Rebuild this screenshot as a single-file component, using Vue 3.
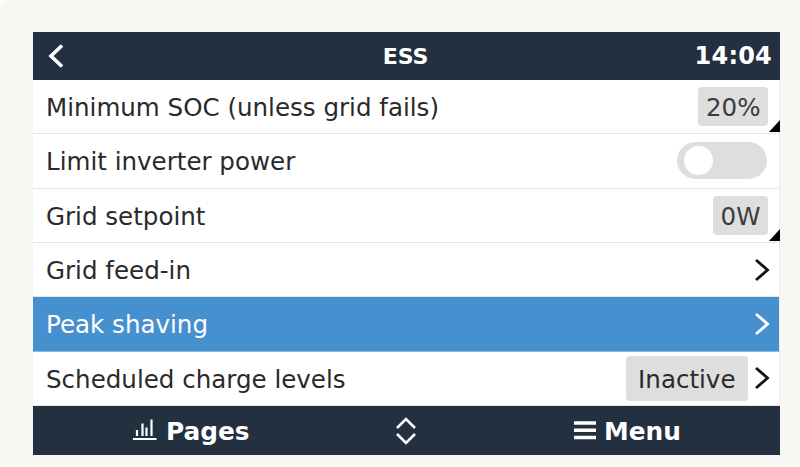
<script setup>
const rows = [
  { label: 'Minimum SOC (unless grid fails)', kind: 'value', value: '20%' },
  { label: 'Limit inverter power', kind: 'toggle' },
  { label: 'Grid setpoint', kind: 'value', value: '0W' },
  { label: 'Grid feed-in', kind: 'chevron' },
  { label: 'Peak shaving', kind: 'chevron', active: true },
  { label: 'Scheduled charge levels', kind: 'chevron', value: 'Inactive' }
]
</script>

<template>
  <div class="page">
    <div class="screen">
      <header class="bar top">
        <svg class="back" width="18" height="26" viewBox="0 0 18 26"><path d="M15 2.500 L4 13 L15 23.500" fill="none" stroke="#fff" stroke-width="3.6"/></svg>
        <span class="title">ESS</span>
        <span class="clock">14:04</span>
      </header>
      <div
        v-for="row in rows"
        :key="row.label"
        class="row"
        :class="{ active: row.active }"
      >
        <span class="label">{{ row.label }}</span>
        <template v-if="row.kind === 'value'">
          <span class="chip">{{ row.value }}</span>
          <i class="corner"></i>
        </template>
        <span v-else-if="row.kind === 'toggle'" class="toggle"><i class="knob"></i></span>
        <template v-else>
          <span v-if="row.value" class="chip wide">{{ row.value }}</span>
          <svg class="chev" width="16" height="24" viewBox="0 0 16 24"><path d="M2 2 L13.500 12 L2 22" fill="none" stroke="currentColor" stroke-width="2.800"/></svg>
        </template>
      </div>
      <footer class="bar bottom">
        <div class="foot-item pages">
          <svg width="24" height="22" viewBox="0 0 24 22"><path d="M0 20H23.500M4 17V11M9.500 17V4.500M13.500 17V8.500M18.500 17V0.500" fill="none" stroke="#fff" stroke-width="2.200"/></svg>
          <span class="foot-text">Pages</span>
        </div>
        <svg class="updown" width="22" height="28" viewBox="0 0 22 28"><path d="M2 11 L11 2 L20 11M2 17 L11 26 L20 17" fill="none" stroke="#fff" stroke-width="2.600"/></svg>
        <div class="foot-item menu">
          <svg width="24" height="20" viewBox="0 0 24 20"><path d="M1 3H23M1 10.200H23M1 17.500H23" fill="none" stroke="#fff" stroke-width="3.500"/></svg>
          <span class="foot-text">Menu</span>
        </div>
      </footer>
    </div>
  </div>
</template>

<style>
html, body { margin: 0; background: #fdfdfb; }
</style>

<style scoped>
.page {
  width: 800px;
  height: 467px;
  box-sizing: border-box;
  padding: 32px 20px 12px 33px;
  background: #f8f7f3;
  border-top-left-radius: 7px;
  overflow: hidden;
  font-family: "DejaVu Sans", sans-serif;
}
.screen {
  width: 747px;
  height: 423px;
  display: flex;
  flex-direction: column;
  background: #fff;
}
.bar {
  display: flex;
  align-items: center;
  flex: none;
  background: #22303f;
  color: #fff;
  font-weight: 700;
}
.top {
  height: 48px;
  padding: 0 8px 0 14px;
  position: relative;
}
.back { flex: none; }
.title {
  position: absolute;
  left: -2px;
  right: 0;
  text-align: center;
  font-size: 22px;
}
.clock {
  margin-left: auto;
  font-size: 24px;
  letter-spacing: 0.2px;
}
.row {
  flex: 1;
  position: relative;
  display: flex;
  align-items: center;
  padding: 0 11px 0 13px;
  border-bottom: 1px solid #e4e4e4;
  border-right: 1px solid #ecebe6;
  color: #2a2a2a;
  font-size: 24.55px;
  min-height: 0;
}
.row.active {
  background: #4790d0;
  color: #fff;
  border-bottom-color: #8cb9e0;
}
.label { margin-right: auto; padding-top: 2px; }
.chip {
  height: 39px;
  line-height: 41px;
  padding: 0 7.5px;
  background: #dedede;
  border-radius: 4px;
  color: #3c3c3c;
}
.chip.wide {
  height: 45px;
  line-height: 47px;
  padding: 0 12.5px;
  margin-right: 6px;
  color: #2a2a2a;
}
.corner {
  position: absolute;
  right: -1px;
  bottom: 1px;
  width: 0;
  height: 0;
  border-left: 11px solid transparent;
  border-bottom: 12px solid #000;
}
.toggle {
  width: 90px;
  height: 37px;
  margin-right: 1px;
  border-radius: 19px;
  background: #dedede;
  display: flex;
  align-items: center;
  padding-left: 7px;
  box-sizing: border-box;
}
.knob {
  width: 29px;
  height: 29px;
  border-radius: 50%;
  background: #fff;
}
.chev { flex: none; color: #111; margin-right: -2px; }
.active .chev { color: #fff; }
.bottom {
  height: 49px;
  font-size: 24.800px;
  position: relative;
  justify-content: center;
}
.foot-item {
  display: flex;
  align-items: center;
  gap: 9px;
  position: absolute;
  top: 9px;
}
.foot-text { padding-top: 2px; }
.pages { left: 100px; }
.menu { left: 540px; gap: 7px; }
.updown { position: absolute; left: 362px; top: 11px; }
</style>
